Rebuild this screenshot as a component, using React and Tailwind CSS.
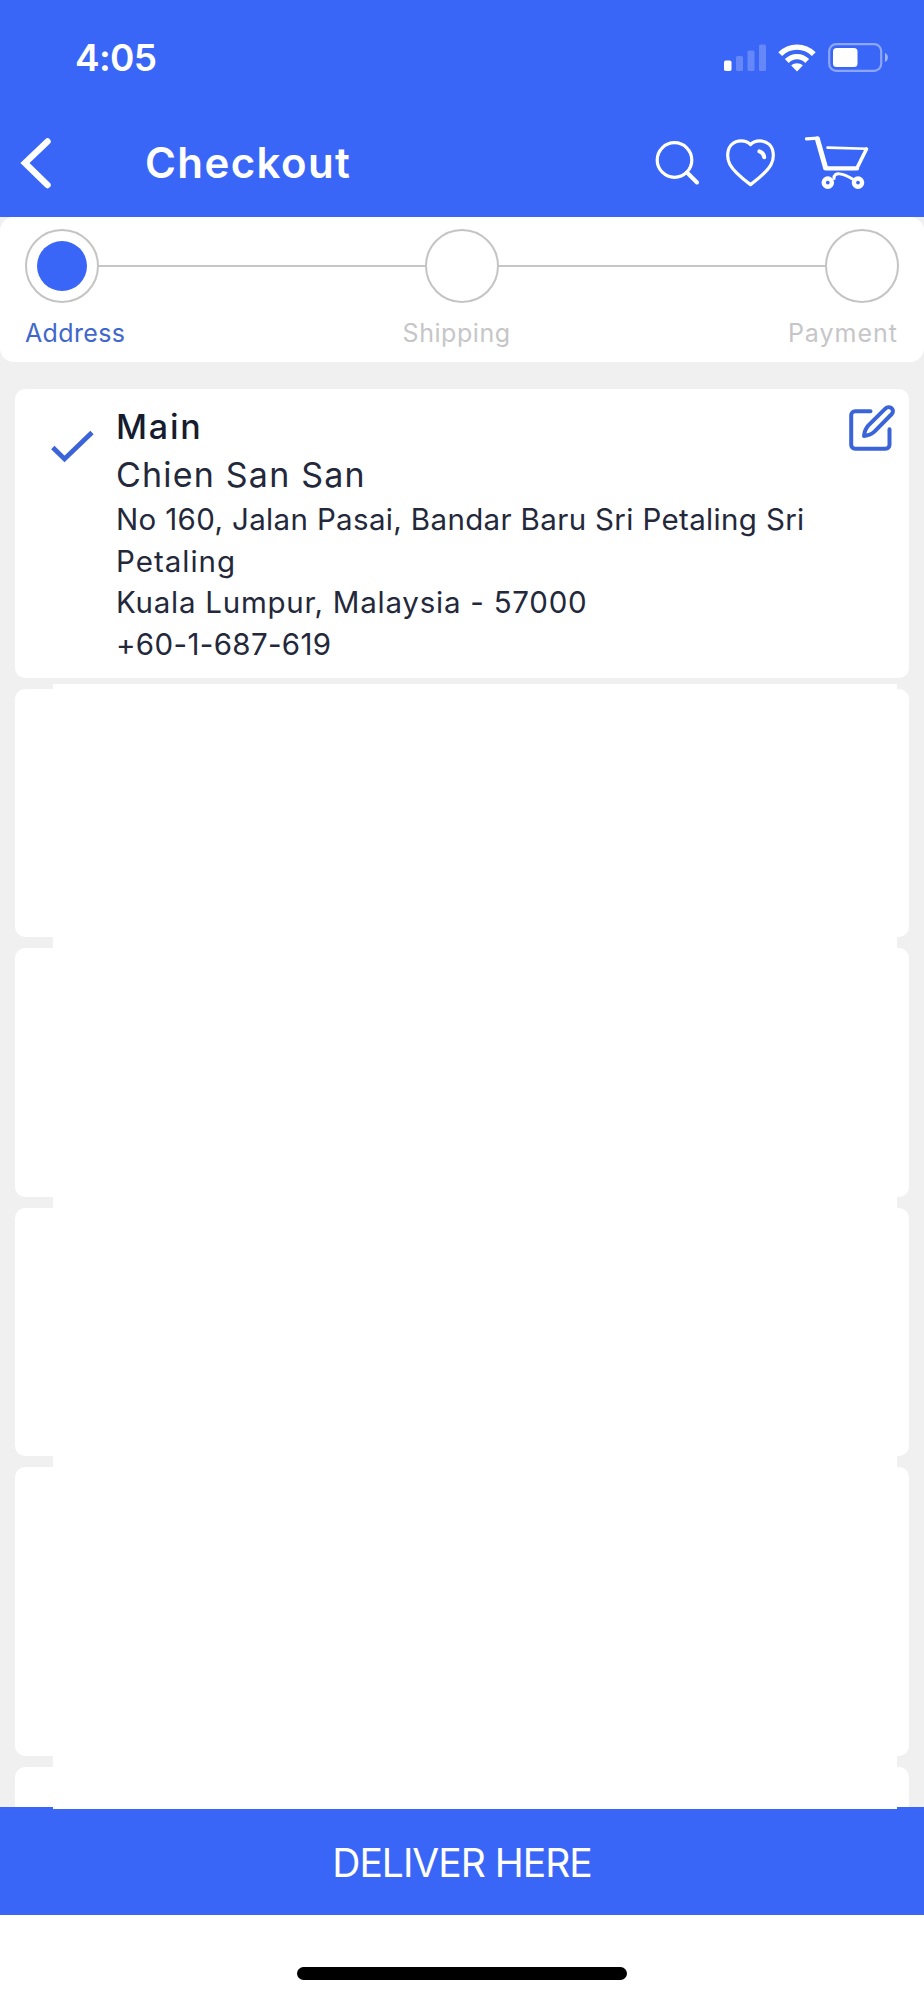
import React from 'react';
import clsx from 'clsx';

const steps = [
  { label: 'Address', active: true, spacing: 'tracking-[0.35px]' },
  { label: 'Shipping', active: false, spacing: 'tracking-[0.55px]' },
  { label: 'Payment', active: false, spacing: 'tracking-[1px]' },
];

// Heights of the address rows below the selected one
const emptyCards = ['h-[248px]', 'h-[249px]', 'h-[248px]', 'h-[289px]', 'h-[60px]'];

const SignalIcon = () => (
  <svg width="42" height="28" viewBox="0 0 42 28" fill="#fff">
    <rect x="0" y="16.5" width="7.5" height="10.5" rx="1.8" />
    <rect x="12" y="12" width="7" height="15" rx="1.5" opacity="0.22" />
    <rect x="23.5" y="6.5" width="7" height="20.5" rx="1.5" opacity="0.22" />
    <rect x="35" y="0.5" width="7" height="26.5" rx="1.5" opacity="0.22" />
  </svg>
);

const WifiIcon = () => (
  <svg width="38" height="28" viewBox="0 0 38 28" fill="none" stroke="#fff" strokeWidth="5.4">
    <path d="M2.2 10.2C11.5 0.8 26.5 0.8 35.8 10.2" />
    <path d="M8.8 17C14.5 11.2 23.5 11.2 29.2 17" />
    <path d="M13.2 21.6C16.3 18.6 21.7 18.6 24.8 21.6L19 27.5Z" fill="#fff" stroke="none" />
  </svg>
);

const BatteryIcon = () => (
  <svg width="61" height="29" viewBox="0 0 61 29" fill="none">
    <rect x="1.2" y="1.2" width="52" height="26.6" rx="7" stroke="#fff" strokeWidth="2.2" opacity="0.42" />
    <rect x="5" y="5" width="24.5" height="19" rx="3.5" fill="#fff" />
    <path d="M57 10C60.8 11.4 60.8 17.6 57 19Z" fill="#fff" opacity="0.5" />
  </svg>
);

const SearchIcon = () => (
  <svg width="46" height="46" viewBox="0 0 46 46" fill="none" stroke="#fff" strokeWidth="3.2">
    <circle cx="19.5" cy="20" r="17.3" />
    <path d="M32 32.5L42 42.5" strokeWidth="4" strokeLinecap="round" />
  </svg>
);

const HeartIcon = () => (
  <svg width="50" height="48" viewBox="0 0 50 48" fill="none" stroke="#fff" strokeWidth="3.2" strokeLinecap="round" strokeLinejoin="round">
    <path d="M24.5 5.6C19.5 0.8 11 0.6 5.8 5.4C0.9 10 0.6 19 3.8 25.2C7.8 33 17 40 24.5 45.6C32 40 41.2 33 45.2 25.2C48.4 19 48.1 10 43.2 5.4C38 0.6 29.5 0.8 24.5 5.6Z" />
    <path d="M33.4 12.4C36 13.2 37.8 15.2 38.2 18.2" strokeWidth="4" />
  </svg>
);

const CartIcon = () => (
  <svg width="64" height="54" viewBox="0 0 64 54" fill="none" stroke="#fff" strokeLinecap="round" strokeLinejoin="round">
    <path d="M1.5 2.8L13 2.2" strokeWidth="3.2" />
    <path d="M12.4 3L20.5 31.5" strokeWidth="5" />
    <path d="M22.5 11.6L61 12.8" strokeWidth="2.6" />
    <path d="M20.5 32.4H52" strokeWidth="4.2" />
    <path d="M52 32L61.5 13" strokeWidth="3.6" />
    <path d="M29 42.5C28.5 35.5 38 37 47.5 43" strokeWidth="3" />
    <circle cx="22.8" cy="46.6" r="4.1" strokeWidth="4.4" />
    <circle cx="53" cy="46.6" r="4.1" strokeWidth="4.4" />
  </svg>
);

const EditIcon = () => (
  <svg width="48" height="48" viewBox="0 0 48 48" fill="none" stroke="#3b64d8" strokeWidth="4" strokeLinecap="round" strokeLinejoin="round">
    <path d="M21.5 7.2H6.2C3.8 7.2 2.2 8.8 2.2 11.2V40.8C2.2 43.2 3.8 44.8 6.2 44.8H36.5C38.9 44.8 40.5 43.2 40.5 40.8V25.2" />
    <path d="M36.6 4.4C40 1 46.6 5 42.8 10L25.4 27.6C22.6 30.2 19.4 31.4 15 32C15.4 27.8 16.6 24.4 19.4 21.4Z" />
  </svg>
);

const Header = () => (
  <header className="h-[217px] bg-[#3a66f7] text-white">
    <div className="flex h-[115px] items-center justify-between pl-[75px] pr-[35px]">
      <span className="text-[37px] leading-none font-semibold tracking-[-0.7px]">4:05</span>
      <div className="flex items-center">
        <SignalIcon />
        <div className="ml-[12px]"><WifiIcon /></div>
        <div className="ml-[12px]"><BatteryIcon /></div>
      </div>
    </div>
    <div className="flex h-[95px] items-center pl-[20px] pr-[55px]">
      <svg width="34" height="54" viewBox="0 0 34 54" fill="none" stroke="#fff" strokeWidth="6.4" strokeLinecap="round">
        <path d="M27.5 5.5L5 27L27.5 49" />
      </svg>
      <h1 className="ml-[91px] text-[42px] leading-none font-semibold tracking-[1.4px]">Checkout</h1>
      <div className="ml-auto flex items-center">
        <SearchIcon />
        <div className="ml-[25px]"><HeartIcon /></div>
        <div className="ml-[29px]"><CartIcon /></div>
      </div>
    </div>
  </header>
);

const Stepper = () => (
  <section className="h-[145px] rounded-[14px] bg-white px-[25px] pt-[12px]">
    <div className="flex items-center">
      {steps.map((step, i) => (
        <React.Fragment key={step.label}>
          {i > 0 && <div className="h-[2.5px] flex-1 bg-[#c6c6c6]" />}
          <div className="flex h-[74px] w-[74px] items-center justify-center rounded-full border-2 border-[#c4c4c4]">
            {step.active && <div className="h-[50px] w-[50px] rounded-full bg-[#3a66f7]" />}
          </div>
        </React.Fragment>
      ))}
    </div>
    <div className="mt-[15px] flex justify-between pr-[1px] text-[25px] leading-[31px]">
      {steps.map((step) => (
        <span key={step.label} className={clsx(step.spacing, step.active ? 'text-[#4068cc]' : 'text-[#c6c6c8]')}>
          {step.label}
        </span>
      ))}
    </div>
  </section>
);

const AddressCard = () => (
  <div className="flex h-[289px] shrink-0 rounded-[10px] bg-white pt-[14px] pr-[29px] pl-[36px]">
    <svg className="mt-[26px] shrink-0" width="46" height="38" viewBox="0 0 46 38" fill="none" stroke="#3b64d8" strokeWidth="4.8">
      <path d="M1.8 18.5L13.5 30L41 3.4" />
    </svg>
    <div className="ml-[19px] flex-1 text-[#23283a]">
      <p className="text-[34px] leading-[48px] font-medium tracking-[1.8px] text-[#161c30]">Main</p>
      <p className="text-[34px] leading-[48px] tracking-[1.2px]">Chien San San</p>
      <div className="text-[29.5px] leading-[41.5px] whitespace-nowrap">
        <p className="tracking-[0.35px]">No 160, Jalan Pasai, Bandar Baru Sri Petaling Sri</p>
        <p className="tracking-[1px]">Petaling</p>
        <p className="tracking-[0.75px]">Kuala Lumpur, Malaysia - 57000</p>
        <p className="tracking-[0.35px]">+60-1-687-619</p>
      </div>
    </div>
    <div className="-mr-[17px] mt-[1px] shrink-0"><EditIcon /></div>
  </div>
);

export default function App() {
  return (
    <div className="flex h-[2000px] w-[924px] flex-col overflow-hidden bg-[#f0f0f1] font-['Inter',sans-serif]">
      <Header />
      <Stepper />
      <main className="relative h-[1445px]">
        <div className="flex h-full flex-col gap-[11px] overflow-hidden px-[15px] pt-[27px]">
          <AddressCard />
          {emptyCards.map((height, i) => (
            <div key={i} className={clsx('shrink-0 rounded-[10px] bg-white', height)} />
          ))}
        </div>
        {/* Blank sheet over the saved addresses */}
        <div className="absolute top-[322px] -bottom-[2px] left-[53px] w-[844px] bg-white" />
      </main>
      <button className="h-[108px] bg-[#3a66f7] pt-[3px] text-center text-[39px] leading-none font-normal tracking-[-1px] text-white">
        DELIVER HERE
      </button>
      <footer className="flex h-[85px] justify-center bg-white pt-[52px]">
        <div className="h-[13px] w-[330px] rounded-full bg-black" />
      </footer>
    </div>
  );
}
